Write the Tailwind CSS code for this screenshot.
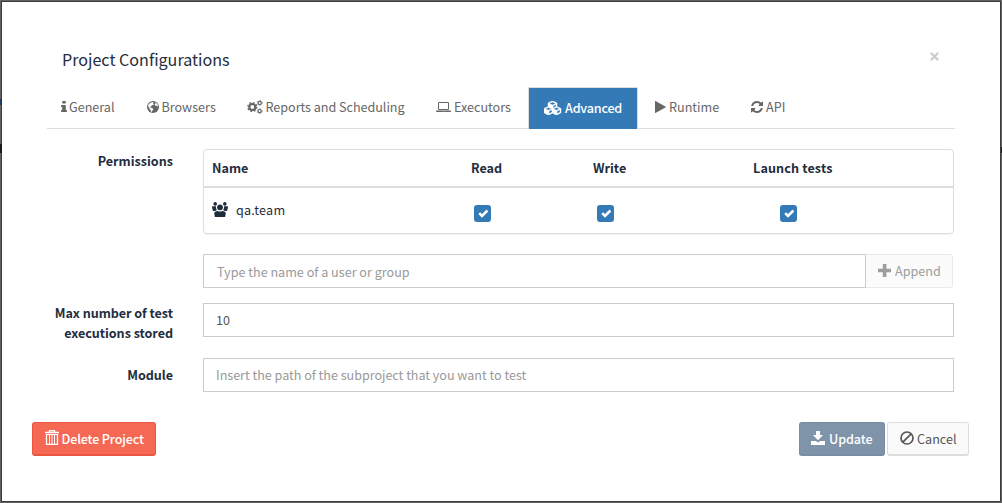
<!DOCTYPE html>
<html lang="en">
<head>
    <meta charset="UTF-8">
    <meta name="viewport" content="width=device-width, initial-scale=1.0">
    <title>Project Configurations</title>
    <script src="https://cdn.jsdelivr.net/npm/@tailwindcss/browser@4"></script>
</head>
<body class="relative w-[1002px] h-[503px] overflow-hidden bg-[#626262] p-[2px] font-['Noto_Sans_CJK_JP','Open_Sans',sans-serif] text-[12.6px] leading-5 text-[#1f2d3d]">
    <!-- Edges of the dimmed page behind the dialog -->
    <span class="absolute left-0 top-[99px] w-[2px] h-[6px] bg-[#1f3a66]"></span>
    <span class="absolute left-0 top-[144px] w-[2px] h-[9px] bg-[#1c1c1c]"></span>
    <span class="absolute right-0 top-[147px] w-[1px] h-[6px] bg-[#1c1c1c]"></span>

    <!-- Dialog -->
    <div class="flex flex-col w-[998px] h-[499px] bg-white outline-1 outline-[#3c3c3c]">
        <div class="flex items-center justify-between h-[85px] pl-[60px] pr-[61px] pt-[29px]">
            <h1 class="text-[16.1px]">Project Configurations</h1>
            <button class="-mt-[5px]">
                <svg class="size-[9px]" viewBox="0 0 9 9" fill="none" stroke="#ccc" stroke-width="2.2"><path d="M.8.8l7.400 7.400M8.200.8L.8 8.200"/></svg>
            </button>
        </div>

        <!-- Tabs -->
        <ul class="flex w-[908px] h-[42px] ml-[45px] border-b border-[#ddd] text-[#666]">
            <li class="flex items-center w-[86px] pl-[14px] pb-[2px] gap-[2px]">
                <svg class="w-[6px] h-[14px]" viewBox="0 0 640 1792" fill="currentColor" preserveAspectRatio="none"><path d="M640 1344v128q0 26-19 45t-45 19h-512q-26 0-45-19t-19-45v-128q0-26 19-45t45-19h64v-384h-64q-26 0-45-19t-19-45v-128q0-26 19-45t45-19h384q26 0 45 19t19 45v576h64q26 0 45 19t19 45zM512 192v192q0 26-19 45t-45 19h-256q-26 0-45-19t-19-45v-192q0-26 19-45t45-19h256q26 0 45 19t19 45z"/></svg>
                General
            </li>
            <li class="flex items-center w-[100px] pl-[14px] pb-[2px] gap-[2.5px]">
                <svg class="size-3" viewBox="0 0 12 12"><circle cx="6" cy="6" r="6" fill="currentColor"/><path d="M3.200 2.100L5.200 1l1.300.6-.5 1 .9.3-.8 1-1.200.4-.4.9-1.100.2-.3.8 1 .5 1.400.5.900 1-.6 1-.9.9-.2 1.100-.9-.6-.3-1.900-1-1-.5-1.500-.9-.9.3-1.700zM8 1.300l1.500.8 1.200 1.500.3 2-.9-.3-.5-.9-1 .3-.9-.6.2-1 .9-.5z" fill="#fff"/></svg>
                Browsers
            </li>
            <li class="flex items-center w-[189px] pl-[14px] pb-[2px] gap-[2.5px] tracking-[-0.03px]">
                <svg class="w-4 h-[14px]" viewBox="0 0 16 14" fill="none" stroke="currentColor">
                    <circle cx="5.300" cy="7" r="3" stroke-width="2.200"/><circle cx="5.300" cy="7" r="4.500" stroke-width="1.300" stroke-dasharray="1.770 1.770"/>
                    <circle cx="12.700" cy="2.900" r="1.600" stroke-width="1.200"/><circle cx="12.700" cy="2.900" r="2.400" stroke-width=".8" stroke-dasharray="1.250 1.250"/>
                    <circle cx="12.700" cy="11.100" r="1.600" stroke-width="1.200"/><circle cx="12.700" cy="11.100" r="2.400" stroke-width=".8" stroke-dasharray="1.250 1.250"/>
                </svg>
                Reports and Scheduling
            </li>
            <li class="flex items-center w-[106px] pl-[14px] pb-[2px] gap-[3px]">
                <svg class="w-[15px] h-[14px]" viewBox="0 0 1920 1792" fill="currentColor"><path d="M416 1280q-66 0-113-47t-47-113v-704q0-66 47-113t113-47h1088q66 0 113 47t47 113v704q0 66-47 113t-113 47h-1088zM384 416v704q0 13 9.500 22.500t22.500 9.500h1088q13 0 22.500-9.500t9.500-22.500v-704q0-13-9.500-22.500t-22.500-9.500h-1088q-13 0-22.500 9.500t-9.500 22.500zM1760 1344h160v96q0 40-47 68t-113 28h-1600q-66 0-113-28t-47-68v-96h1760zM1040 1440q16 0 16-16t-16-16h-160q-16 0-16 16t16 16h160z"/></svg>
                Executors
            </li>
            <li class="flex items-center w-[110px] h-[42px] pl-[15px] pb-[2px] gap-[3px] border border-b-0 border-[#ddd] bg-[#337ab7] font-medium text-white tracking-[-0.2px]">
                <svg class="w-[18px] h-[14px]" viewBox="0 0 2304 1792" fill="currentColor"><path d="M640 1632l384-192v-314l-384 164v342zm-64-454l404-173-404-173-404 173zm1088 454l384-192v-314l-384 164v342zm-64-454l404-173-404-173-404 173zm-448-293l384-165v-266l-384 164v267zm-64-379l441-189-441-189-441 189zm1088 518v416q0 36-19 67t-52 47l-448 224q-25 14-57 14t-57-14l-448-224q-4-2-7-4-2 2-7 4l-448 224q-25 14-57 14t-57-14l-448-224q-33-16-52-47t-19-67v-416q0-38 21.500-70t56.500-48l434-186v-400q0-38 21.500-70t56.500-48l448-192q23-10 50-10t50 10l448 192q35 16 56.500 48t21.500 70v400l434 186q36 16 57 48t21 70z" stroke="currentColor" stroke-width="60"/></svg>
                Advanced
            </li>
            <li class="flex items-center w-[95px] ml-[3px] pl-[14px] pb-[2px] gap-[3px]">
                <svg class="w-[11px] h-[14px]" viewBox="0 0 1408 1792" fill="currentColor"><path d="M1384 927l-1328 738q-23 13-39.500 3t-16.500-36v-1472q0-26 16.500-36t39.500 3l1328 738q23 13 23 31t-23 31z"/></svg>
                Runtime
            </li>
            <li class="flex items-center pl-[15px] pb-[2px] gap-[3px]">
                <svg class="w-[12px] h-[14px]" viewBox="0 0 1536 1792" fill="currentColor"><path d="M1511 1056q0 5-1 7-64 268-268 434.500t-478 166.500q-146 0-282.500-55t-243.500-157l-129 129q-19 19-45 19t-45-19-19-45v-448q0-26 19-45t45-19h448q26 0 45 19t19 45-19 45l-137 137q71 66 161 102t187 36q134 0 250-65t186-179q11-17 53-117 8-23 30-23h192q13 0 22.500 9.500t9.500 22.500zM1536 256v448q0 26-19 45t-45 19h-448q-26 0-45-19t-19-45 19-45l138-138q-148-137-349-137-134 0-250 65t-186 179q-11 17-53 117-8 23-30 23h-199q-13 0-22.500-9.500t-9.500-22.500v-7q65-268 270-434.500t480-166.500q146 0 284 55.500t245 156.500l130-129q19-19 45-19t45 19 19 45z"/></svg>
                API
            </li>
        </ul>

        <!-- Permissions -->
        <div class="flex mt-5">
            <div class="w-[171px] mr-[30px] pt-[2px] text-right font-bold">Permissions</div>
            <div class="w-[751px]">
                <div class="h-[85px] border border-[#ddd] rounded shadow-[0_1px_1px_rgba(0,0,0,0.05)]">
                    <div class="grid grid-cols-[267px_122px_160px_1fr] items-center h-[38px] border-b-2 border-[#ddd] font-bold">
                        <span class="pl-2">Name</span><span>Read</span><span>Write</span><span class="tracking-[0.12px]">Launch tests</span>
                    </div>
                    <div class="grid grid-cols-[267px_122px_160px_1fr] h-[45px] pt-[12px]">
                        <span class="flex items-start pl-2 gap-2">
                            <svg class="w-4 h-[15px] mt-[2px]" viewBox="0 0 16 15" fill="currentColor"><circle cx="3.200" cy="1.900" r="1.800"/><circle cx="12.800" cy="1.900" r="1.800"/><circle cx="8" cy="5.300" r="2.900"/><path d="M0 5q0-.7.7-.7h3.300q-.5 2.300.8 3.700L3.200 9H1Q.3 7 0 5zM16 5q0-.7-.7-.7H12q.5 2.300-.8 3.700L12.800 9H15q.7-2 1-4zM2.200 11.500q0-1.800 2-2.200L5.700 9q2.300 1.200 4.600 0l1.500.3q2 .4 2 2.200l-.7 3.500H2.900z"/></svg>
                            <span class="tracking-[0.2px]">qa.team</span>
                        </span>
                        <span class="flex size-[17px] mt-[5px] ml-[3px] rounded-[3px] bg-[#337ab7] text-white"><svg class="size-[17px]" viewBox="0 0 17 17" fill="none" stroke="currentColor" stroke-width="2.500"><path d="M5.200 8.200l2.800 2.800 5.400-5.500"/></svg></span>
                        <span class="flex size-[17px] mt-[5px] ml-[4px] rounded-[3px] bg-[#337ab7] text-white"><svg class="size-[17px]" viewBox="0 0 17 17" fill="none" stroke="currentColor" stroke-width="2.500"><path d="M5.200 8.200l2.800 2.800 5.400-5.500"/></svg></span>
                        <span class="flex size-[17px] mt-[5px] ml-[27px] rounded-[3px] bg-[#337ab7] text-white"><svg class="size-[17px]" viewBox="0 0 17 17" fill="none" stroke="currentColor" stroke-width="2.500"><path d="M5.200 8.200l2.800 2.800 5.400-5.500"/></svg></span>
                    </div>
                </div>
                <div class="flex w-[750px] h-[34px] mt-5">
                    <input type="text" class="w-[663px] px-[13px] pt-[2px] border border-[#ccc] placeholder:text-[#999]" placeholder="Type the name of a user or group">
                    <button class="flex items-center flex-1 pl-3 gap-1 border border-l-0 border-[#e9e9e9] rounded-r-[3px] bg-[#fbfbfb] text-[#9d9d9d]">
                        <svg class="size-[13px] -mt-px" viewBox="0 0 13 13" fill="currentColor"><path d="M4.800 0h3.600v4.800H13v3.400H8.400V13H4.800V8.200H0V4.800h4.800z"/></svg>
                        Append
                    </button>
                </div>
            </div>
        </div>

        <div class="flex mt-[15px]">
            <label for="max-executions" class="w-[171px] mr-[30px] text-right font-bold tracking-[-0.05px]">Max number of test<br>executions stored</label>
            <input id="max-executions" type="text" class="w-[751px] h-[34px] px-3 pb-[2px] border border-[#ccc] text-[#555]" value="10">
        </div>

        <div class="flex mt-[15px]">
            <label for="module" class="w-[171px] mr-[30px] pt-[7px] text-right font-bold tracking-[-0.05px]">Module</label>
            <input id="module" type="text" class="w-[751px] h-[34px] px-3 pb-[2px] border border-[#ccc] tracking-[-0.03px] placeholder:text-[#999]" placeholder="Insert the path of the subproject that you want to test">
        </div>

        <!-- Actions -->
        <div class="flex h-[34px] mt-[30px] ml-[30px]">
            <button class="flex items-center w-[124px] pl-3 gap-[2.5px] border border-[#ea5540] border-b-2 rounded-[3px] bg-[#f56954] font-medium text-white tracking-[-0.15px] whitespace-nowrap">
                <svg class="w-[14px] h-[15px] -mt-[2px]" viewBox="0 0 14 15" fill="none" stroke="currentColor"><path d="M0 2.500h14M4.500 2V.5h5V2M1.500 4v10.500h11V4" stroke-width="1.300"/><path d="M2 4.500h10M4.500 5v9M7 5v9M9.500 5v9"/></svg>
                Delete Project
            </button>
            <button class="flex items-center w-[86px] ml-[643px] pl-[11px] gap-1 border border-[#788ca3] border-b-2 rounded-[3px] bg-[#7f93a9] font-medium text-white tracking-[-0.1px]">
                <svg class="size-[14px] -mt-px" viewBox="0 0 14 14" fill="currentColor"><path d="M5 0h4v4h3L7 9.300 2 4h3zM0 10h5l2 1.500L9 10h5v4H0z"/></svg>
                Update
            </button>
            <button class="flex items-center w-[82px] ml-[2px] pl-3 gap-[3px] border border-[#ddd] border-b-2 rounded-[3px] bg-[#fafafa] text-[#555]">
                <svg class="size-[14px] -mt-px" viewBox="0 0 14 14" fill="none" stroke="currentColor" stroke-width="1.700"><circle cx="7" cy="7" r="6"/><path d="M2.800 11.200l8.400-8.400"/></svg>
                Cancel
            </button>
        </div>
    </div>
</body>
</html>
